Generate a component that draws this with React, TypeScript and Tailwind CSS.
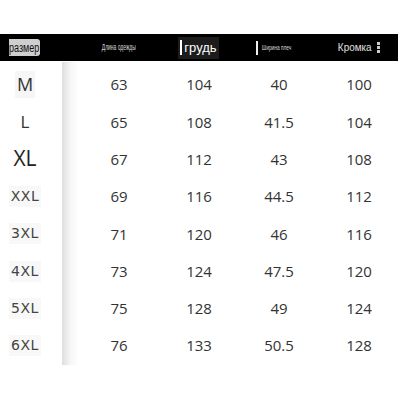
import React from "react";

interface SizeRow {
  size: string;
  length: string;
  chest: string;
  shoulder: string;
  hem: string;
}

const ROWS: SizeRow[] = [
  { size: "M", length: "63", chest: "104", shoulder: "40", hem: "100" },
  { size: "L", length: "65", chest: "108", shoulder: "41.5", hem: "104" },
  { size: "XL", length: "67", chest: "112", shoulder: "43", hem: "108" },
  { size: "XXL", length: "69", chest: "116", shoulder: "44.5", hem: "112" },
  { size: "3XL", length: "71", chest: "120", shoulder: "46", hem: "116" },
  { size: "4XL", length: "73", chest: "124", shoulder: "47.5", hem: "120" },
  { size: "5XL", length: "75", chest: "128", shoulder: "49", hem: "124" },
  { size: "6XL", length: "76", chest: "133", shoulder: "50.5", hem: "128" },
];

// Size labels in the source image use different fonts per row
function SizeLabel({ size }: { size: string }) {
  if (size === "M") {
    return <span className="bg-[#f6f6f6] px-[2px] text-[18px] text-[#333] font-['Open_Sans',sans-serif]">M</span>;
  }
  if (size === "L") {
    return <span className="text-[17px] text-[#333] font-['Open_Sans',sans-serif]">L</span>;
  }
  if (size === "XL") {
    return <span className="text-[21px] text-[#222] font-['Open_Sans',sans-serif]">XL</span>;
  }
  return (
    <span className="bg-[#f8f8f8] px-[2px] text-[14px] tracking-[0.5px] text-[#444] font-['DejaVu_Sans',sans-serif]">
      {size}
    </span>
  );
}

export default function App() {
  return (
    <div className="w-[400px] h-[400px] bg-white overflow-hidden font-['Open_Sans',sans-serif]">
      {/* Header */}
      <div className="mt-[34px] h-[27px] w-[398px] bg-black flex items-center">
        <div className="w-[79px] flex items-center">
          <div className="ml-[9px] w-[31px] h-[17px] bg-[#cfcfcf] rounded-r-[3px] flex items-center justify-center">
            <span className="text-[12px] text-[#111] scale-x-75 whitespace-nowrap font-['Liberation_Sans',sans-serif]">размер</span>
          </div>
        </div>
        <div className="w-[80px] flex justify-center">
          <span className="text-[9px] text-[#ddd] scale-x-[0.55] whitespace-nowrap font-['Liberation_Sans',sans-serif]">Длина одежды</span>
        </div>
        <div className="w-[80px] flex justify-center">
          <div className="h-[22px] px-[2px] bg-[#1c1c1c] flex items-center">
            <span className="w-[2px] h-[15px] bg-white mr-[2px]" />
            <span className="text-[13px] text-white font-['Liberation_Sans',sans-serif]">грудь</span>
          </div>
        </div>
        <div className="w-[80px] flex justify-center items-center">
          <span className="w-[2px] h-[14px] bg-[#eee]" />
          <span className="text-[8px] text-[#ddd] scale-x-[0.6] -ml-[6px] whitespace-nowrap font-['Liberation_Sans',sans-serif]">Ширина плеч</span>
        </div>
        <div className="w-[80px] flex justify-center items-center gap-[4px]">
          <span className="text-[11px] text-[#e0e0e0] scale-x-90 whitespace-nowrap font-['Liberation_Sans',sans-serif]">Кромка</span>
          <span className="flex flex-col gap-[1px]">
            <span className="w-[3px] h-[3px] bg-[#ccc]" />
            <span className="w-[3px] h-[3px] bg-[#ccc]" />
            <span className="w-[3px] h-[3px] bg-[#ccc]" />
          </span>
        </div>
      </div>

      {/* Body */}
      <div className="flex pt-[1px]">
        <div className="w-[62px] pt-[4px]">
          {ROWS.map((row) => (
            <div key={row.size} className="h-[37.3px] flex items-center justify-center pr-[12px]">
              <SizeLabel size={row.size} />
            </div>
          ))}
        </div>
        <div className="w-[17px] h-[303px] bg-gradient-to-r from-[#dedede] via-[#f6f6f6] to-white" />
        <div className="pt-[4px]">
          {ROWS.map((row) => (
            <div key={row.size} className="h-[37.3px] grid grid-cols-[80px_80px_80px_80px] items-center text-center text-[15px] text-[#333]">
              <div>{row.length}</div>
              <div>{row.chest}</div>
              <div>{row.shoulder}</div>
              <div>{row.hem}</div>
            </div>
          ))}
        </div>
      </div>
    </div>
  );
}
